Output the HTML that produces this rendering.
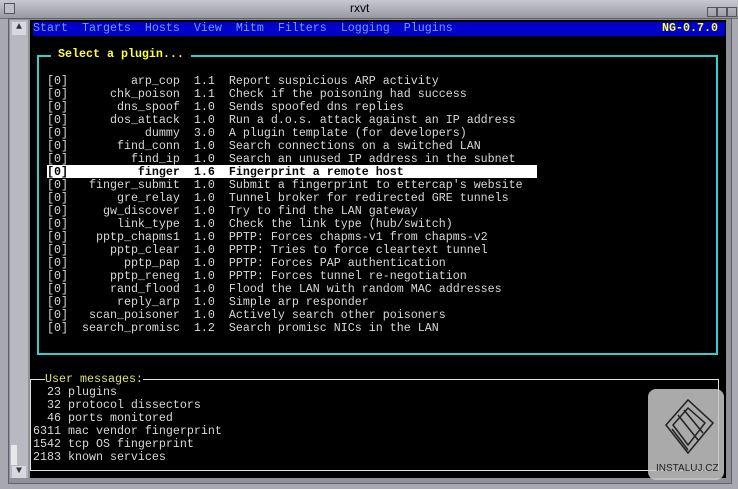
<!DOCTYPE html><html><head><style>
body{margin:0;width:738px;height:489px;background:#a8a8b0;position:relative;overflow:hidden;font-family:"Liberation Mono",monospace}
.t{position:absolute;white-space:pre;font-size:11.67px;line-height:13px;color:#d8d8d8}
</style></head><body>
<div style="position:absolute;left:0;top:0;width:738px;height:18px;background:linear-gradient(#c8c8d0,#9898a0);border-bottom:1px solid #707078"></div>
<div style="position:absolute;left:4px;top:3px;width:9px;height:9px;border:1px solid #555;background:#c0c0c8"></div>
<div class="t" style="left:350px;top:2px;color:#000;font-family:'Liberation Sans',sans-serif;font-size:12px">rxvt</div>
<div style="position:absolute;left:707px;top:7px;width:8px;height:8px;border:1px solid #555"></div>
<div style="position:absolute;left:717px;top:7px;width:8px;height:8px;border:1px solid #555"></div>
<div style="position:absolute;left:727px;top:7px;width:8px;height:8px;border:1px solid #555"></div>
<div style="position:absolute;left:8px;top:18px;width:722px;height:464px;background:#909098;border:1px solid #606068"></div>
<div style="position:absolute;left:10px;top:20px;width:18px;height:458px;background:#b8b8c0"></div>
<div style="position:absolute;left:12px;top:22px;width:14px;height:13px;background:#d8d8e0;color:#333;font-size:10px;text-align:center">▲</div>
<div style="position:absolute;left:11px;top:445px;width:6px;height:20px;background:#e8e8e8"></div>
<div style="position:absolute;left:12px;top:466px;width:14px;height:12px;background:#d8d8e0;color:#333;font-size:10px;text-align:center">▼</div>
<div style="position:absolute;left:30px;top:20px;width:696px;height:458px;background:#000"></div>
<div style="position:absolute;left:33px;top:22px;width:692px;height:14px;background:#0000c8"></div>
<div class="t" style="left:33px;top:22px;color:#6f9fff">Start  Targets  Hosts  View  Mitm  Filters  Logging  Plugins</div>
<div class="t" style="left:662px;top:22px;color:#ffff40;font-weight:bold">NG-0.7.0</div>
<div style="position:absolute;left:37px;top:55px;width:677px;height:296px;border:2px solid #30d0d0"></div>
<div class="t" style="left:51px;top:48px;background:#000;color:#ffff40;font-weight:bold"> Select a plugin... </div>
<div style="position:absolute;left:47px;top:165px;width:490px;height:13px;background:#fff"></div>
<div class="t" style="left:47px;top:75px">[0]         arp_cop  1.1  Report suspicious ARP activity
[0]      chk_poison  1.1  Check if the poisoning had success
[0]       dns_spoof  1.0  Sends spoofed dns replies
[0]      dos_attack  1.0  Run a d.o.s. attack against an IP address
[0]           dummy  3.0  A plugin template (for developers)
[0]       find_conn  1.0  Search connections on a switched LAN
[0]         find_ip  1.0  Search an unused IP address in the subnet
<b style="color:#000">[0]          finger  1.6  Fingerprint a remote host</b>
[0]   finger_submit  1.0  Submit a fingerprint to ettercap's website
[0]       gre_relay  1.0  Tunnel broker for redirected GRE tunnels
[0]     gw_discover  1.0  Try to find the LAN gateway
[0]       link_type  1.0  Check the link type (hub/switch)
[0]    pptp_chapms1  1.0  PPTP: Forces chapms-v1 from chapms-v2
[0]      pptp_clear  1.0  PPTP: Tries to force cleartext tunnel
[0]        pptp_pap  1.0  PPTP: Forces PAP authentication
[0]      pptp_reneg  1.0  PPTP: Forces tunnel re-negotiation
[0]      rand_flood  1.0  Flood the LAN with random MAC addresses
[0]       reply_arp  1.0  Simple arp responder
[0]   scan_poisoner  1.0  Actively search other poisoners
[0]  search_promisc  1.2  Search promisc NICs in the LAN</div>
<div style="position:absolute;left:30px;top:379px;width:687px;height:90px;border:1px solid #e0e0e0"></div>
<div class="t" style="left:45px;top:373px;background:#000;color:#e0e070">User messages:</div>
<div class="t" style="left:33px;top:386px">  23 plugins
  32 protocol dissectors
  46 ports monitored
6311 mac vendor fingerprint
1542 tcp OS fingerprint
2183 known services</div>
<div style="position:absolute;left:648px;top:389px;width:76px;height:91px;background:rgba(200,200,200,0.85);border-radius:8px"></div>
<svg style="position:absolute;left:658px;top:395px" width="60" height="70"><g fill="none" stroke="#222" stroke-width="1.5"><path d="M8 30 L30 5 L55 28 L30 58 Z"/><path d="M15 30 L30 13 L47 28 L30 50 Z"/><path d="M20 20 L40 45 M26 15 L45 38 M14 34 L30 55"/></g></svg>
<div class="t" style="left:656px;top:462px;color:#222;font-family:'Liberation Sans',sans-serif;font-size:10px">INSTALUJ.CZ</div>
</body></html>
